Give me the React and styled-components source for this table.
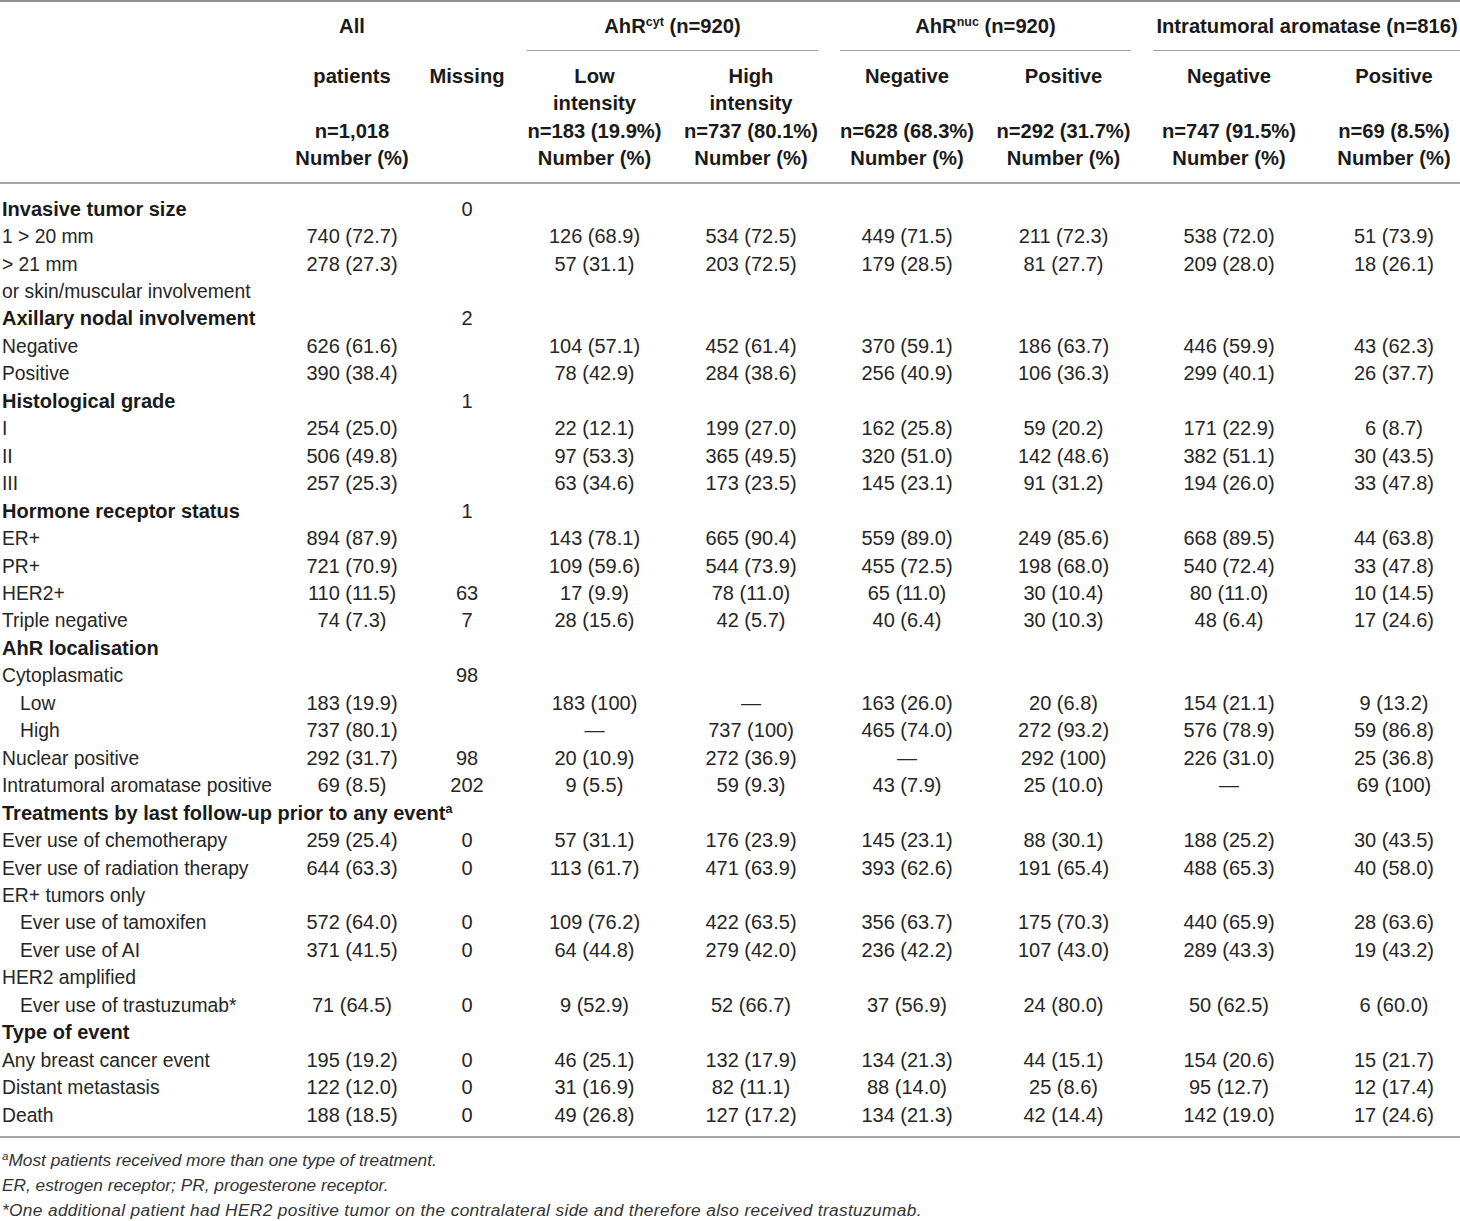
import React from 'react';
import styled, { createGlobalStyle } from 'styled-components';

const Global = createGlobalStyle`
  html, body {
    margin: 0;
    padding: 0;
    background: #fff;
    overflow: hidden;
  }
  body {
    font-family: "Liberation Sans", Arial, sans-serif;
    color: #262626;
  }
`;

const Wrap = styled.div`
  width: 1472px;
`;

const Table = styled.table`
  width: 1472px;
  table-layout: fixed;
  border-collapse: collapse;
  border-top: 2px solid #8f8f8f;
  border-bottom: 2px solid #a8a8a8;
  font-size: 19.3px;
`;

const HeadRow = styled.tr`
  font-weight: bold;
  font-size: 20.2px;
  color: #1a1a1a;
`;

const TopCell = styled.th`
  padding: 11px 0 8px;
  line-height: 27px;
  text-align: center;
  vertical-align: top;
  font-weight: bold;
`;

const GroupTitle = styled.div`
  margin: 0 11px;
  padding: 0 0 10px;
  line-height: 27px;
  border-bottom: 1px solid #a0a0a0;
  white-space: nowrap;
`;

const GroupCell = styled.th`
  padding: 11px 0 0;
  vertical-align: top;
  text-align: center;
  font-weight: bold;
`;

const SubCell = styled.th`
  padding: 12px 0 9px;
  line-height: 27.4px;
  text-align: center;
  vertical-align: top;
  font-weight: bold;
  white-space: nowrap;
  border-bottom: 2px solid #a8a8a8;
`;

const Sup = styled.sup`
  font-size: 12.5px;
  line-height: 0;
  vertical-align: 7px;
`;

const Row = styled.tr`
  & > td {
    padding-top: ${(p) => (p.$first ? '12px' : '0')};
    padding-bottom: ${(p) => (p.$last ? '7px' : '0')};
  }
`;

const Cell = styled.td`
  line-height: 27.45px;
  padding: 0;
  font-size: 20px;
  text-align: center;
  white-space: nowrap;
`;

const Label = styled.td`
  line-height: 27.45px;
  padding: 0 0 0 ${(p) => (p.$indent ? '20px' : '2px')};
  text-align: left;
  white-space: nowrap;
  font-size: ${(p) => (p.$bold ? '20px' : '19.3px')};
  font-weight: ${(p) => (p.$bold ? 'bold' : 'normal')};
  color: ${(p) => (p.$bold ? '#1a1a1a' : 'inherit')};
`;

const Notes = styled.div`
  padding: 10px 0 0 2px;
  font-size: 17.3px;
  font-style: italic;
  color: #333;
`;

const Note = styled.div`
  line-height: 25px;
  white-space: nowrap;
  letter-spacing: ${(p) => p.$spread || 0};
`;

const NoteSup = styled.sup`
  font-size: 11.5px;
  line-height: 0;
  vertical-align: 6px;
`;

const widths = [286, 132, 98, 157, 156, 156, 157, 174, 156];

const rows = [
  { label: 'Invasive tumor size', bold: true, missing: '0' },
  { label: '1 > 20 mm', v: ['740 (72.7)', '', '126 (68.9)', '534 (72.5)', '449 (71.5)', '211 (72.3)', '538 (72.0)', '51 (73.9)'] },
  { label: '> 21 mm', v: ['278 (27.3)', '', '57 (31.1)', '203 (72.5)', '179 (28.5)', '81 (27.7)', '209 (28.0)', '18 (26.1)'] },
  { label: 'or skin/muscular involvement' },
  { label: 'Axillary nodal involvement', bold: true, missing: '2' },
  { label: 'Negative', v: ['626 (61.6)', '', '104 (57.1)', '452 (61.4)', '370 (59.1)', '186 (63.7)', '446 (59.9)', '43 (62.3)'] },
  { label: 'Positive', v: ['390 (38.4)', '', '78 (42.9)', '284 (38.6)', '256 (40.9)', '106 (36.3)', '299 (40.1)', '26 (37.7)'] },
  { label: 'Histological grade', bold: true, missing: '1' },
  { label: 'I', v: ['254 (25.0)', '', '22 (12.1)', '199 (27.0)', '162 (25.8)', '59 (20.2)', '171 (22.9)', '6 (8.7)'] },
  { label: 'II', v: ['506 (49.8)', '', '97 (53.3)', '365 (49.5)', '320 (51.0)', '142 (48.6)', '382 (51.1)', '30 (43.5)'] },
  { label: 'III', v: ['257 (25.3)', '', '63 (34.6)', '173 (23.5)', '145 (23.1)', '91 (31.2)', '194 (26.0)', '33 (47.8)'] },
  { label: 'Hormone receptor status', bold: true, missing: '1' },
  { label: 'ER+', v: ['894 (87.9)', '', '143 (78.1)', '665 (90.4)', '559 (89.0)', '249 (85.6)', '668 (89.5)', '44 (63.8)'] },
  { label: 'PR+', v: ['721 (70.9)', '', '109 (59.6)', '544 (73.9)', '455 (72.5)', '198 (68.0)', '540 (72.4)', '33 (47.8)'] },
  { label: 'HER2+', v: ['110 (11.5)', '63', '17 (9.9)', '78 (11.0)', '65 (11.0)', '30 (10.4)', '80 (11.0)', '10 (14.5)'] },
  { label: 'Triple negative', v: ['74 (7.3)', '7', '28 (15.6)', '42 (5.7)', '40 (6.4)', '30 (10.3)', '48 (6.4)', '17 (24.6)'] },
  { label: 'AhR localisation', bold: true },
  { label: 'Cytoplasmatic', missing: '98' },
  { label: 'Low', indent: true, v: ['183 (19.9)', '', '183 (100)', '—', '163 (26.0)', '20 (6.8)', '154 (21.1)', '9 (13.2)'] },
  { label: 'High', indent: true, v: ['737 (80.1)', '', '—', '737 (100)', '465 (74.0)', '272 (93.2)', '576 (78.9)', '59 (86.8)'] },
  { label: 'Nuclear positive', v: ['292 (31.7)', '98', '20 (10.9)', '272 (36.9)', '—', '292 (100)', '226 (31.0)', '25 (36.8)'] },
  { label: 'Intratumoral aromatase positive', v: ['69 (8.5)', '202', '9 (5.5)', '59 (9.3)', '43 (7.9)', '25 (10.0)', '—', '69 (100)'] },
  { label: 'Treatments by last follow-up prior to any event', sup: 'a', bold: true },
  { label: 'Ever use of chemotherapy', v: ['259 (25.4)', '0', '57 (31.1)', '176 (23.9)', '145 (23.1)', '88 (30.1)', '188 (25.2)', '30 (43.5)'] },
  { label: 'Ever use of radiation therapy', v: ['644 (63.3)', '0', '113 (61.7)', '471 (63.9)', '393 (62.6)', '191 (65.4)', '488 (65.3)', '40 (58.0)'] },
  { label: 'ER+ tumors only' },
  { label: 'Ever use of tamoxifen', indent: true, v: ['572 (64.0)', '0', '109 (76.2)', '422 (63.5)', '356 (63.7)', '175 (70.3)', '440 (65.9)', '28 (63.6)'] },
  { label: 'Ever use of AI', indent: true, v: ['371 (41.5)', '0', '64 (44.8)', '279 (42.0)', '236 (42.2)', '107 (43.0)', '289 (43.3)', '19 (43.2)'] },
  { label: 'HER2 amplified' },
  { label: 'Ever use of trastuzumab*', indent: true, v: ['71 (64.5)', '0', '9 (52.9)', '52 (66.7)', '37 (56.9)', '24 (80.0)', '50 (62.5)', '6 (60.0)'] },
  { label: 'Type of event', bold: true },
  { label: 'Any breast cancer event', v: ['195 (19.2)', '0', '46 (25.1)', '132 (17.9)', '134 (21.3)', '44 (15.1)', '154 (20.6)', '15 (21.7)'] },
  { label: 'Distant metastasis', v: ['122 (12.0)', '0', '31 (16.9)', '82 (11.1)', '88 (14.0)', '25 (8.6)', '95 (12.7)', '12 (17.4)'] },
  { label: 'Death', v: ['188 (18.5)', '0', '49 (26.8)', '127 (17.2)', '134 (21.3)', '42 (14.4)', '142 (19.0)', '17 (24.6)'] },
];

const subHeads = [
  ['Low', 'intensity', 'n=183 (19.9%)'],
  ['High', 'intensity', 'n=737 (80.1%)'],
  ['Negative', '', 'n=628 (68.3%)'],
  ['Positive', '', 'n=292 (31.7%)'],
  ['Negative', '', 'n=747 (91.5%)'],
  ['Positive', '', 'n=69 (8.5%)'],
];

export default function App() {
  return (
    <Wrap>
      <Global />
      <Table>
        <colgroup>
          {widths.map((w, i) => (
            <col key={i} style={{ width: w }} />
          ))}
        </colgroup>
        <thead>
          <HeadRow>
            <TopCell />
            <TopCell>All</TopCell>
            <TopCell />
            <GroupCell colSpan={2}>
              <GroupTitle>
                AhR<Sup>cyt</Sup> (n=920)
              </GroupTitle>
            </GroupCell>
            <GroupCell colSpan={2}>
              <GroupTitle>
                AhR<Sup>nuc</Sup> (n=920)
              </GroupTitle>
            </GroupCell>
            <GroupCell colSpan={2}>
              <GroupTitle>Intratumoral aromatase (n=816)</GroupTitle>
            </GroupCell>
          </HeadRow>
          <HeadRow>
            <SubCell />
            <SubCell>
              patients
              <br />
              &nbsp;
              <br />
              n=1,018
              <br />
              Number (%)
            </SubCell>
            <SubCell>Missing</SubCell>
            {subHeads.map((h, i) => (
              <SubCell key={i}>
                {h[0]}
                <br />
                {h[1] || '\u00a0'}
                <br />
                {h[2]}
                <br />
                Number (%)
              </SubCell>
            ))}
          </HeadRow>
        </thead>
        <tbody>
          {rows.map((r, i) => {
            const vals = r.v || ['', r.missing || '', '', '', '', '', '', ''];
            return (
              <Row key={i} $first={i === 0} $last={i === rows.length - 1}>
                <Label $bold={r.bold} $indent={r.indent}>
                  {r.label}
                  {r.sup && <Sup>{r.sup}</Sup>}
                </Label>
                {vals.map((v, j) => (
                  <Cell key={j}>{v}</Cell>
                ))}
              </Row>
            );
          })}
        </tbody>
      </Table>
      <Notes>
        <Note>
          <NoteSup>a</NoteSup>Most patients received more than one type of treatment.
        </Note>
        <Note>ER, estrogen receptor; PR, progesterone receptor.</Note>
        <Note $spread="0.35px">
          *One additional patient had HER2 positive tumor on the contralateral side and therefore also received trastuzumab.
        </Note>
      </Notes>
    </Wrap>
  );
}
